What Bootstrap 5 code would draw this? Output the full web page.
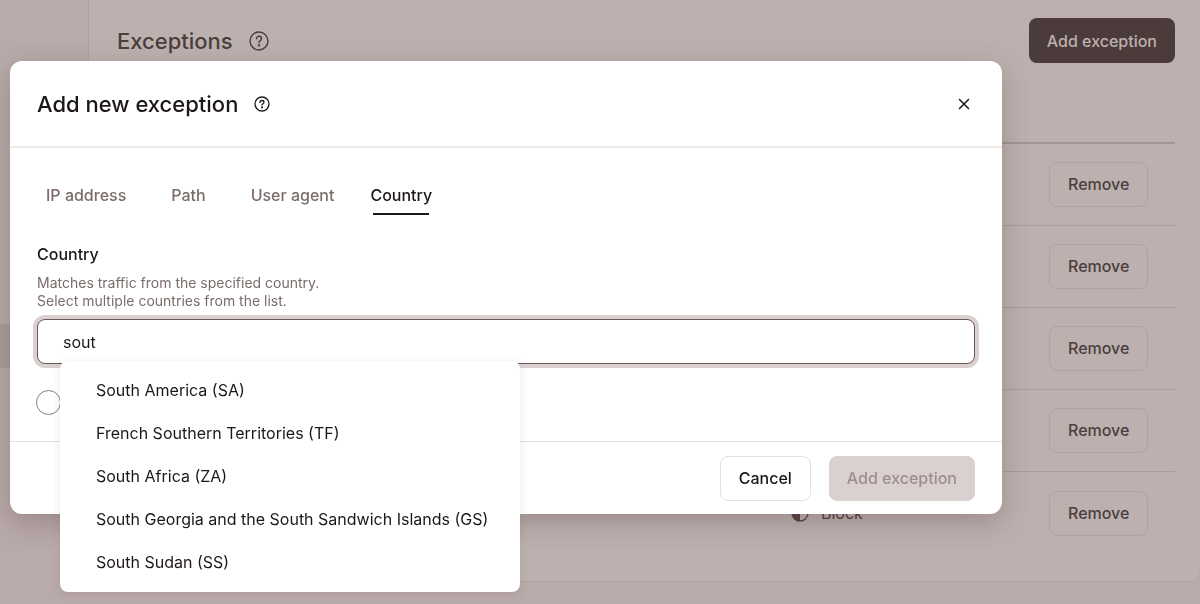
<!DOCTYPE html>
<html lang="en">
<head>
<meta charset="utf-8">
<meta name="viewport" content="width=device-width, initial-scale=1">
<title>Exceptions</title>
<link href="https://cdn.jsdelivr.net/npm/bootstrap@5.3.0/dist/css/bootstrap.min.css" rel="stylesheet">
<style>
  body { font-family: Inter, "Liberation Sans", sans-serif; font-size: 16px; line-height: 24px; background: #b9abaa; color: #4b3e3d; overflow: hidden; }
  .side { width: 88px; flex: none; padding-top: 324px; }
  .side a { display: block; height: 44px; background: #a99d9c; }
  .panel { background: #bdb1b0; border: 1px solid #b1a3a2; border-width: 0 0 1px 1px; border-radius: 0 0 12px 0; padding: 18px 25px 26px 28px; }
  .page-title { font-size: 22px; line-height: 32px; font-weight: 500; }
  .btn { --bs-btn-font-size: 16px; --bs-btn-font-weight: 500; --bs-btn-line-height: 24px; --bs-btn-border-radius: 8px; --bs-btn-padding-x: 17px; height: 45px; white-space: nowrap; }
  .btn-ink { background: #4b3c3b; color: #bdb1b0; }
  .btn-edge { border-color: #b1a2a1; color: #4b3e3d; --bs-btn-padding-x: 18px; }
  .rules { color: #4b3e3d; margin: 0; --bs-table-bg: transparent; }
  .rules th, .rules td { height: 82px; padding: 0; border-bottom: 1px solid #ab9d9c; color: #4b3e3d; vertical-align: middle; }
  .rules th { height: 80px; border-bottom: 2px solid #a49695; }
  .rules tr:last-child td { height: 84px; border-bottom: 0; }
  .rules .act { width: 126px; }
  .rules .mode { width: 258px; }

  .modal-dialog { max-width: none; margin: 61px 198px 0 10px; }
  .modal-content { border: 0; border-radius: 12px; color: #1e1718; box-shadow: 0 8px 28px rgba(75, 50, 50, .3); }
  .modal-header { height: 87px; padding: 0 27px; border-bottom: 2px solid #f0ebe7; }
  .modal-title { font-size: 22px; line-height: 32px; font-weight: 500; }
  .modal-body { padding: 35px 27px 26px; }
  .modal-footer { height: 73px; padding: 0 27px; gap: 18px; border-top: 1px solid #e2e0e0; }
  .modal-footer > * { margin: 0; }
  .close-x { width: 22px; height: 22px; }
  .kinds { gap: 27px; margin-bottom: 27px; }
  .kinds .nav-link { padding: 0 9px; height: 32px; line-height: 24px; color: #7b6c6b; font-weight: 500; position: relative; }
  .kinds .nav-link.active { padding: 0; color: #1e1718; }
  .kinds .active::after { content: ""; position: absolute; left: 3px; right: 3px; bottom: 0; height: 2px; background: #1e1718; }
  .form-label { font-weight: 500; margin-bottom: 8px; display: block; }
  .hint { font-size: 14px; line-height: 18px; color: #7b6c6b; margin: 0 0 9px; }
  .query, .query:focus { height: 45px; padding: 0 25px; border: 1px solid #6b5a59; border-radius: 8px; font-size: 16px; color: #1e1718; box-shadow: 0 0 0 4px #d9d0cf; }
  .matches { top: 42px; left: 23px; width: 460px; padding: 7px 0 9px; border: 0; border-radius: 8px; box-shadow: 0 2px 8px rgba(75, 50, 50, .12); }
  .matches .dropdown-item { height: 43px; padding: 0 36px; color: #1e1718; font-size: 16px; }
  .mode-choice { margin: 26px 0 0 -1px; }
  .choice { width: 25px; height: 25px; margin: 0; border: 1px solid #8d7c7b; }
  .btn-cancel { border: 1px solid #e6dfde; color: #1e1718; --bs-btn-padding-x: 18px; }
  .btn-add:disabled { background: #d9d0cf; color: #9b8e8d; border-color: #d9d0cf; opacity: 1; }
</style>
</head>
<body>
<div class="d-flex">
  <nav class="side" aria-label="Sections"><a href="#" aria-label="Exceptions"></a></nav>
  <main class="panel flex-grow-1">
    <header class="d-flex align-items-center justify-content-between">
      <div class="d-flex align-items-center gap-2">
        <h1 class="page-title m-0">Exceptions</h1>
        <svg class="ms-2" width="20" height="20" viewBox="0 0 20 20" fill="none" stroke="#4b3e3d" stroke-width="1.4" stroke-linecap="round"><circle cx="10" cy="10" r="9"/><path d="M7.5 7.8c0-1.4 1.1-2.5 2.5-2.5s2.5 1 2.5 2.4c0 1.8-2.5 2-2.5 3.8"/><circle cx="10" cy="14.2" r=".5" fill="#4b3e3d"/></svg>
      </div>
      <button class="btn btn-ink" type="button">Add exception</button>
    </header>
    <table class="table rules">
      <thead><tr><th></th><th class="mode"></th><th class="act"></th></tr></thead>
      <tbody>
        <tr><td></td><td></td><td><button class="btn btn-edge" type="button">Remove</button></td></tr>
        <tr><td></td><td></td><td><button class="btn btn-edge" type="button">Remove</button></td></tr>
        <tr><td></td><td></td><td><button class="btn btn-edge" type="button">Remove</button></td></tr>
        <tr><td></td><td></td><td><button class="btn btn-edge" type="button">Remove</button></td></tr>
        <tr><td></td><td><span class="d-flex align-items-center"><svg class="me-2" width="18" height="18" viewBox="0 0 18 18"><circle cx="9" cy="9" r="8" fill="none" stroke="#5a4341" stroke-width="1.4"/><path d="M9 1a8 8 0 0 0 0 16z" fill="#5a4341"/></svg><span class="ms-1">Block</span></span></td><td><button class="btn btn-edge" type="button">Remove</button></td></tr>
      </tbody>
    </table>
  </main>
</div>

<div class="modal show d-block" role="dialog" aria-modal="true" aria-labelledby="dlg-title">
  <div class="modal-dialog">
    <div class="modal-content">
      <div class="modal-header">
        <div class="d-flex align-items-center gap-3">
          <h2 class="modal-title" id="dlg-title">Add new exception</h2>
          <svg width="16" height="16" viewBox="0 0 16 16" fill="none" stroke="#1e1718" stroke-width="1.3" stroke-linecap="round"><circle cx="8" cy="8" r="7"/><path d="M6 6.4c0-1.1.9-1.9 2-1.9s2 .8 2 1.8c0 1.4-2 1.5-2 2.8"/><circle cx="8" cy="11.4" r=".4" fill="#1e1718"/></svg>
        </div>
        <button class="close-x border-0 bg-transparent p-0 d-flex align-items-center justify-content-center" type="button" aria-label="Close"><svg width="12" height="12" viewBox="0 0 12 12" stroke="#1e1718" stroke-width="1.5" stroke-linecap="round"><path d="M1.5 1.5l9 9M10.5 1.5l-9 9"/></svg></button>
      </div>
      <div class="modal-body">
        <nav class="nav kinds">
          <a class="nav-link" href="#">IP address</a>
          <a class="nav-link" href="#">Path</a>
          <a class="nav-link" href="#">User agent</a>
          <a class="nav-link active" href="#" aria-current="page">Country</a>
        </nav>
        <label class="form-label" for="country">Country</label>
        <p class="hint" id="country-hint">Matches traffic from the specified country.<br>Select multiple countries from the list.</p>
        <div class="position-relative">
          <input class="form-control query" id="country" type="text" value="sout" autocomplete="off" aria-describedby="country-hint">
          <div class="dropdown-menu matches show">
            <button class="dropdown-item" type="button">South America (SA)</button>
            <button class="dropdown-item" type="button">French Southern Territories (TF)</button>
            <button class="dropdown-item" type="button">South Africa (ZA)</button>
            <button class="dropdown-item" type="button">South Georgia and the South Sandwich Islands (GS)</button>
            <button class="dropdown-item" type="button">South Sudan (SS)</button>
          </div>
        </div>
        <div class="d-flex mode-choice">
          <input class="form-check-input choice" type="radio" name="mode" aria-label="Exception mode">
        </div>
      </div>
      <div class="modal-footer">
        <button class="btn btn-cancel" type="button">Cancel</button>
        <button class="btn btn-add" type="button" disabled>Add exception</button>
      </div>
    </div>
  </div>
</div>
<script src="https://cdn.jsdelivr.net/npm/bootstrap@5.3.0/dist/js/bootstrap.bundle.min.js"></script>
</body>
</html>
